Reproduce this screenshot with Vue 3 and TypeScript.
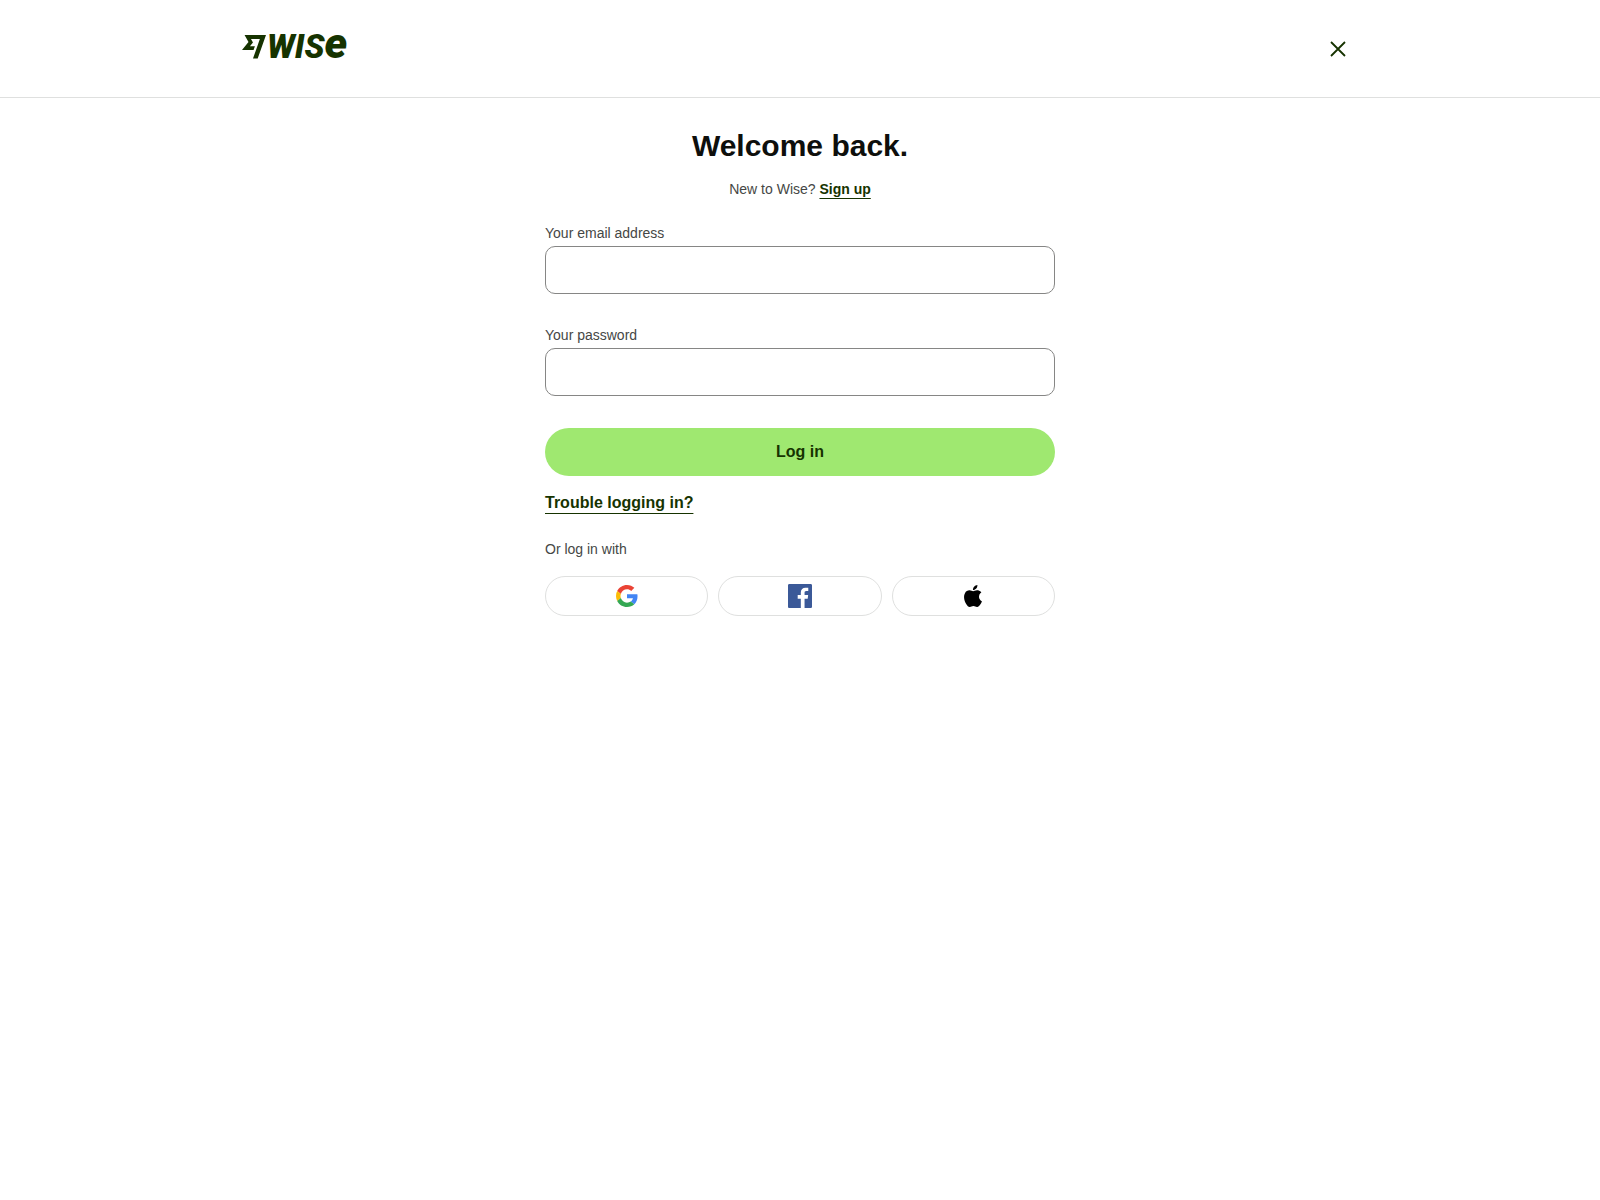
<script setup lang="ts">
import { ref } from 'vue'

const email = ref('')
const password = ref('')
</script>

<template>
  <div class="page">
    <header class="header">
      <div class="header-inner">
        <a class="logo" href="#" aria-label="Wise home">
          <svg width="108" height="32" viewBox="0 0 108 32" role="img" aria-label="Wise">
            <path
              transform="translate(0 4.4) scale(1 1.03)"
              d="M6.488 7.469 0 15.05h11.585l1.301-3.576H7.922l3.033-3.507.01-.092L8.993 4.48h8.873l-6.878 18.925h4.706L24 .595H2.543l3.945 6.874Z"
            />
            <text x="25" y="28" class="wordmark">WIS<tspan class="wordmark-e">e</tspan></text>
          </svg>
        </a>
        <button class="close" type="button" aria-label="Close">
          <svg width="16" height="16" viewBox="0 0 16 16">
            <path d="M1 1 15 15M15 1 1 15" fill="none" stroke="#163300" stroke-width="1.8" />
          </svg>
        </button>
      </div>
    </header>

    <main class="main">
      <h1 class="title">Welcome back.</h1>
      <p class="subtitle">New to Wise? <a class="link" href="#">Sign up</a></p>

      <form @submit.prevent>
        <div class="field">
          <label for="email">Your email address</label>
          <input id="email" v-model="email" type="email" autocomplete="username" />
        </div>
        <div class="field">
          <label for="password">Your password</label>
          <input id="password" v-model="password" type="password" autocomplete="current-password" />
        </div>
        <button class="submit" type="submit">Log in</button>
      </form>

      <div class="trouble"><a class="link" href="#">Trouble logging in?</a></div>

      <p class="alternative">Or log in with</p>
      <div class="socials">
        <button class="social" type="button" aria-label="Google">
          <svg width="22" height="22" viewBox="0 0 48 48">
            <path fill="#EA4335" d="M24 9.5c3.54 0 6.71 1.22 9.21 3.6l6.85-6.85C35.9 2.38 30.47 0 24 0 14.62 0 6.51 5.38 2.56 13.22l7.98 6.19C12.43 13.72 17.74 9.5 24 9.5z" />
            <path fill="#4285F4" d="M46.98 24.55c0-1.57-.15-3.09-.38-4.55H24v9.02h12.94c-.58 2.96-2.26 5.48-4.78 7.18l7.73 6c4.51-4.18 7.09-10.36 7.09-17.65z" />
            <path fill="#FBBC05" d="M10.53 28.59c-.48-1.45-.76-2.99-.76-4.59s.27-3.14.76-4.59l-7.98-6.19C.92 16.46 0 20.12 0 24c0 3.88.92 7.54 2.56 10.78l7.97-6.19z" />
            <path fill="#34A853" d="M24 48c6.48 0 11.93-2.13 15.89-5.81l-7.73-6c-2.15 1.45-4.92 2.3-8.16 2.3-6.26 0-11.57-4.22-13.47-9.91l-7.98 6.19C6.51 42.62 14.62 48 24 48z" />
          </svg>
        </button>
        <button class="social" type="button" aria-label="Facebook">
          <svg width="24" height="24" viewBox="0 0 24 24">
            <path fill="#3B5998" d="M22.675 0H1.325C.593 0 0 .593 0 1.325v21.351C0 23.407.593 24 1.325 24H12.82v-9.294H9.692v-3.622h3.128V8.413c0-3.1 1.893-4.788 4.659-4.788 1.325 0 2.463.099 2.795.143v3.24l-1.918.001c-1.504 0-1.795.715-1.795 1.763v2.313h3.587l-.467 3.622h-3.12V24h6.116c.73 0 1.323-.593 1.323-1.325V1.325C24 .593 23.407 0 22.675 0z" />
          </svg>
        </button>
        <button class="social" type="button" aria-label="Apple">
          <svg width="22" height="22" viewBox="0 0 24 24">
            <path d="M12.152 6.896c-.948 0-2.415-1.078-3.96-1.04-2.04.027-3.91 1.183-4.961 3.014-2.117 3.675-.546 9.103 1.519 12.09 1.013 1.454 2.208 3.09 3.792 3.039 1.52-.065 2.09-.987 3.935-.987 1.831 0 2.35.987 3.96.948 1.637-.026 2.676-1.48 3.676-2.948 1.156-1.688 1.636-3.325 1.662-3.415-.039-.013-3.182-1.221-3.22-4.857-.026-3.04 2.48-4.494 2.597-4.559-1.429-2.09-3.623-2.324-4.39-2.376-2-.156-3.675 1.09-4.61 1.09zM15.53 3.83c.843-1.012 1.4-2.427 1.245-3.83-1.207.052-2.662.805-3.532 1.818-.78.896-1.454 2.338-1.273 3.714 1.338.104 2.715-.688 3.559-1.701" />
          </svg>
        </button>
      </div>
    </main>
  </div>
</template>

<style>
body {
  background: #fff;
}
</style>

<style scoped>
.page {
  font-family: 'Liberation Sans', Arial, sans-serif;
  font-size: 14px;
  line-height: 22px;
  color: #454745;
}

.page *,
.page {
  box-sizing: border-box;
}

.header {
  border-bottom: 1px solid #dfe0df;
}

.header-inner {
  display: flex;
  align-items: center;
  justify-content: space-between;
  max-width: 1140px;
  height: 97px;
  margin: 0 auto;
  padding: 0 12px;
}

.logo {
  display: flex;
  margin-bottom: 6px;
}

.logo svg {
  fill: #163300;
  overflow: visible;
}

.wordmark {
  font-family: Roboto, sans-serif;
  font-size: 33px;
  font-weight: 900;
  font-style: italic;
}

.wordmark-e {
  font-size: 43px;
}

.close {
  display: flex;
  align-items: center;
  justify-content: center;
  width: 40px;
  height: 40px;
  padding: 0;
  border: 0;
  background: none;
  cursor: pointer;
}

.main {
  max-width: 542px;
  margin: 0 auto;
  padding: 32px 16px;
}

.title {
  margin: 0 0 16px;
  font-size: 30px;
  line-height: 32px;
  text-align: center;
  color: #0e0f0c;
}

.subtitle {
  margin: 0 0 22px;
  text-align: center;
}

.link {
  color: #163300;
  font-weight: 700;
  text-decoration: underline;
  text-decoration-thickness: 1px;
  text-underline-offset: 4px;
  text-decoration-skip-ink: none;
}

.trouble .link {
  text-underline-offset: 5px;
}

.field {
  display: flex;
  flex-direction: column;
  gap: 2px;
  margin-bottom: 30px;
}

.field input {
  width: 100%;
  height: 48px;
  padding: 0 16px;
  border: 1px solid #868685;
  border-radius: 10px;
  background: #fff;
  font: inherit;
  font-size: 16px;
  color: #0e0f0c;
}

.submit {
  width: 100%;
  height: 48px;
  margin-top: 2px;
  border: 0;
  border-radius: 24px;
  background: #9fe870;
  color: #163300;
  font: inherit;
  font-size: 16px;
  font-weight: 700;
  cursor: pointer;
}

.trouble {
  margin: 16px 0 24px;
  font-size: 16px;
}

.alternative {
  margin: 0 0 16px;
}

.socials {
  display: flex;
  gap: 10px;
}

.social {
  display: flex;
  flex: 1;
  align-items: center;
  justify-content: center;
  height: 40px;
  padding: 0;
  border: 1px solid #dfe0df;
  border-radius: 20px;
  background: #fff;
  cursor: pointer;
}
</style>
